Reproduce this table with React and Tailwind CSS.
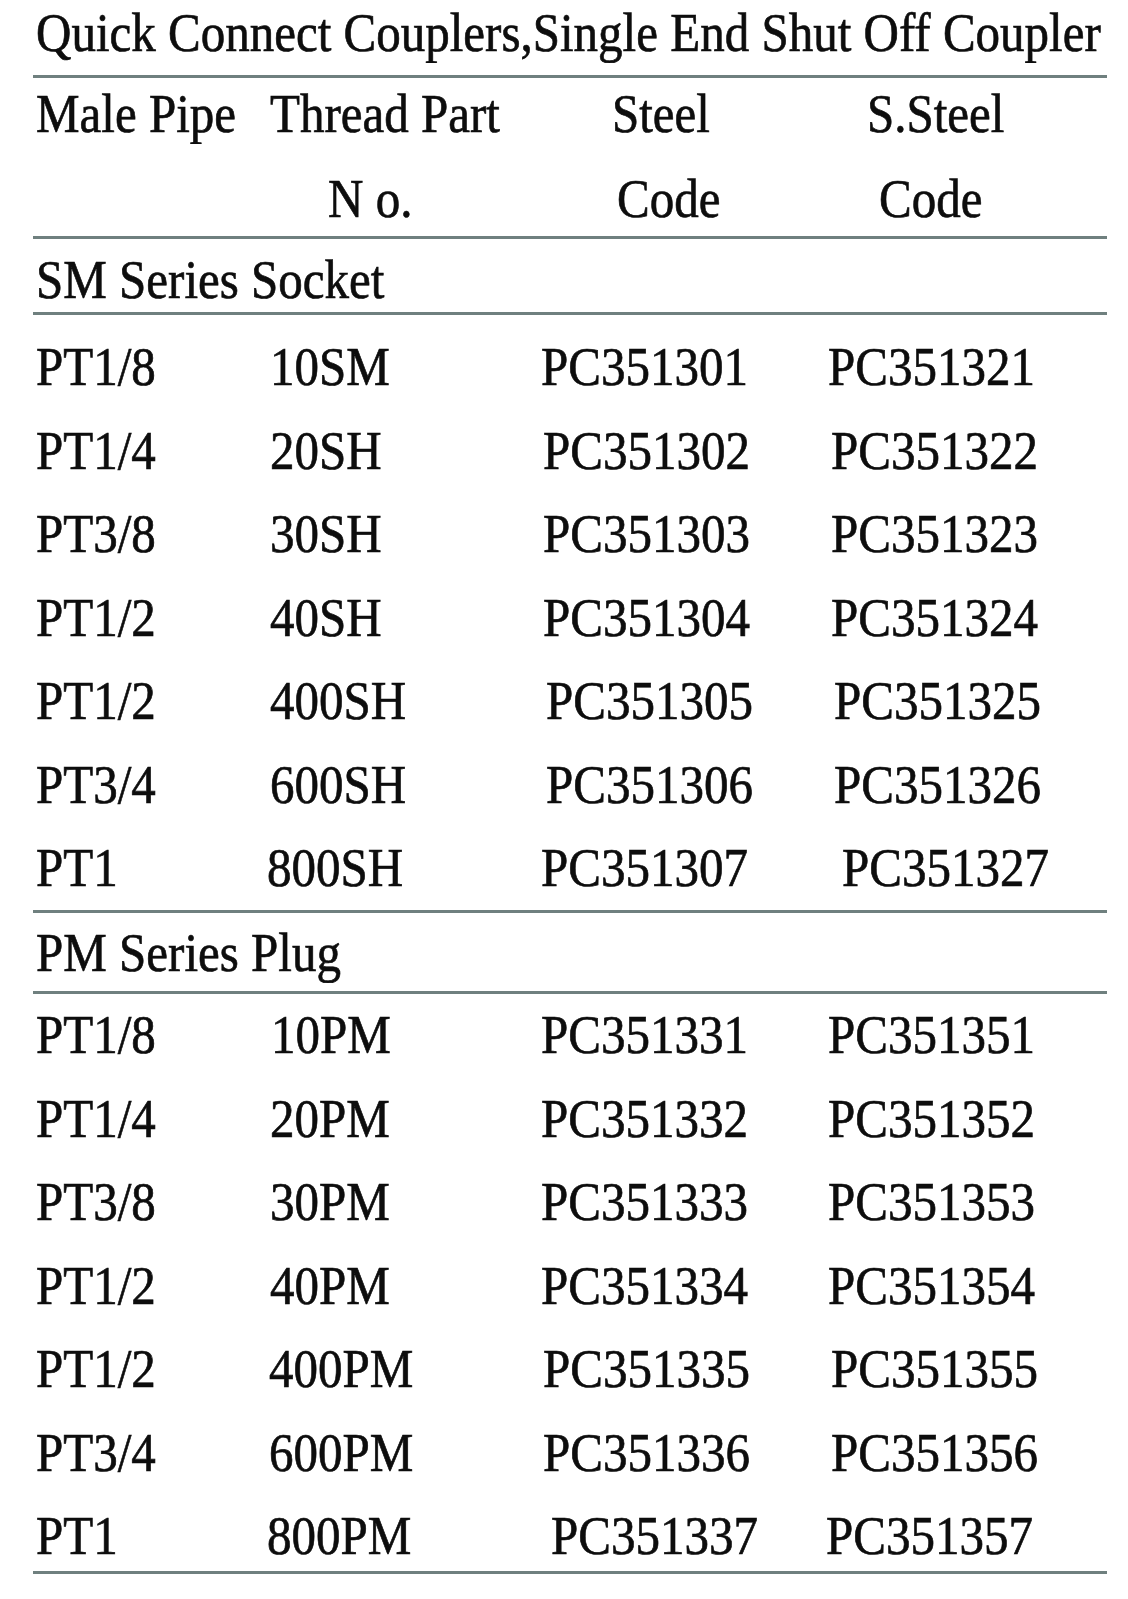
import React from "react";

const sm = [
  ["PT1/8", "10SM", "ml-[3px]", "PC351301", "ml-[0px]", "PC351321", "ml-[2px]"],
  ["PT1/4", "20SH", "ml-[3px]", "PC351302", "ml-[2px]", "PC351322", "ml-[5px]"],
  ["PT3/8", "30SH", "ml-[3px]", "PC351303", "ml-[2px]", "PC351323", "ml-[5px]"],
  ["PT1/2", "40SH", "ml-[3px]", "PC351304", "ml-[2px]", "PC351324", "ml-[5px]"],
  ["PT1/2", "400SH", "ml-[3px]", "PC351305", "ml-[5px]", "PC351325", "ml-[8px]"],
  ["PT3/4", "600SH", "ml-[3px]", "PC351306", "ml-[5px]", "PC351326", "ml-[8px]"],
  ["PT1", "800SH", "ml-[0px]", "PC351307", "ml-[0px]", "PC351327", "ml-[16px]"],
];

const pm = [
  ["PT1/8", "10PM", "ml-[4px]", "PC351331", "ml-[0px]", "PC351351", "ml-[2px]"],
  ["PT1/4", "20PM", "ml-[3px]", "PC351332", "ml-[0px]", "PC351352", "ml-[2px]"],
  ["PT3/8", "30PM", "ml-[3px]", "PC351333", "ml-[0px]", "PC351353", "ml-[2px]"],
  ["PT1/2", "40PM", "ml-[3px]", "PC351334", "ml-[0px]", "PC351354", "ml-[2px]"],
  ["PT1/2", "400PM", "ml-[2px]", "PC351335", "ml-[2px]", "PC351355", "ml-[5px]"],
  ["PT3/4", "600PM", "ml-[2px]", "PC351336", "ml-[2px]", "PC351356", "ml-[5px]"],
  ["PT1", "800PM", "ml-[0px]", "PC351337", "ml-[10px]", "PC351357", "ml-[0px]"],
];

const T = ({ children, className = "" }) => (
  <span className={"inline-block scale-y-[1.1] whitespace-pre " + className}>{children}</span>
);

const Line = () => <div className="h-[3px] w-full bg-[#6f807f]" />;

const grid = "grid grid-cols-[234px_274px_285px_1fr]";

function DataRows({ rows }) {
  return (
    <div className="flex flex-col gap-[13.5px]">
      {rows.map((r, i) => (
        <div key={i} className={grid + " leading-[70px] h-[70px]"}>
          <div className="pl-[3px]"><T>{r[0]}</T></div>
          <div><T className={r[2]}>{r[1]}</T></div>
          <div><T className={r[4]}>{r[3]}</T></div>
          <div><T className={r[6]}>{r[5]}</T></div>
        </div>
      ))}
    </div>
  );
}

export default function App() {
  return (
    <div className="w-[1128px] h-[1599px] bg-white text-[#0d0d0d] [-webkit-text-stroke:0.6px_#0d0d0d] overflow-hidden" style={{ fontFamily: '"Liberation Serif", "Times New Roman", serif' }}>
      <div className="ml-[33px] w-[1074px] text-[49px]">
        <div className="h-[75px]">
          <div className="leading-[66px] pl-[3px]"><T>Quick Connect Couplers,Single End Shut Off Coupler</T></div>
        </div>
        <Line />
        <div className="h-[158px]">
          <div className={grid + " leading-[72px] h-[72px]"}>
            <div className="pl-[3px]"><T>Male Pipe</T></div>
            <div><T className="ml-[3px]">Thread Part</T></div>
            <div><T className="ml-[71px]">Steel</T></div>
            <div><T className="ml-[41px]">S.Steel</T></div>
          </div>
          <div className={grid + " mt-[12px] leading-[74px] h-[74px]"}>
            <div />
            <div><T className="ml-[61px]">N o.</T></div>
            <div><T className="ml-[76px]">Code</T></div>
            <div><T className="ml-[53px]">Code</T></div>
          </div>
        </div>
        <Line />
        <div className="h-[73px] pt-[9px]">
          <div className="leading-[64px] pl-[3px]"><T>SM Series Socket</T></div>
        </div>
        <Line />
        <div className="pt-[17px] pb-[6.5px]">
          <DataRows rows={sm} />
        </div>
        <Line />
        <div className="pt-[8px] pb-[7px]">
          <div className="leading-[63px] h-[63px] pl-[3px]"><T>PM Series Plug</T></div>
        </div>
        <Line />
        <div className="pt-[6.5px]">
          <DataRows rows={pm} />
        </div>
        <Line />
      </div>
    </div>
  );
}
